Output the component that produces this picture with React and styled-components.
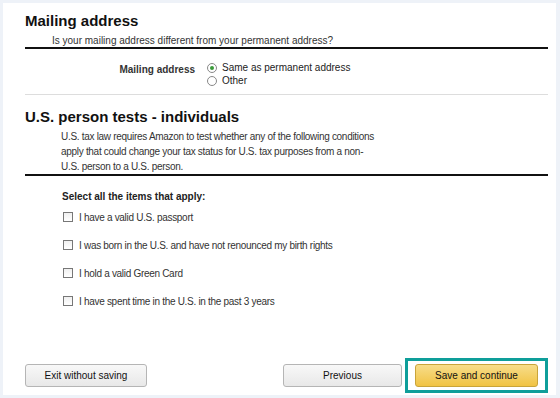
import styled, { createGlobalStyle } from "styled-components";

const GlobalStyle = createGlobalStyle`
  html, body {
    margin: 0;
    padding: 0;
    background: #eef2f8;
  }
  body {
    font-family: "Liberation Sans", Arial, sans-serif;
    color: #333;
  }
`;

const Page = styled.div`
  width: 560px;
  height: 398px;
  padding: 3px 4px 3px 3px;
  box-sizing: border-box;
`;

const Panel = styled.div`
  background: #fff;
  height: 100%;
  padding: 0 8px 0 22px;
  box-sizing: border-box;
  display: flex;
  flex-direction: column;
`;

const Heading = styled.h2`
  margin: ${(p) => p.$top}px 0 0;
  font-size: 15px;
  font-weight: bold;
  color: #111;
  line-height: 20px;
`;

const Intro = styled.p`
  margin: ${(p) => p.$top || 0}px 0 0 ${(p) => p.$indent}px;
  font-size: 10px;
  line-height: ${(p) => p.$lh || 15}px;
  letter-spacing: ${(p) => p.$tight || 0}px;
  color: #333;
  white-space: nowrap;
`;

const Rule = styled.div`
  height: ${(p) => (p.$light ? 1 : 2)}px;
  background: ${(p) => (p.$light ? "#ddd" : "#111")};
  margin-top: ${(p) => p.$top}px;
`;

const FieldRow = styled.div`
  display: flex;
  align-items: flex-start;
  margin-top: 12px;
`;

const FieldLabel = styled.div`
  width: 170px;
  text-align: right;
  font-size: 10px;
  line-height: 12px;
  font-weight: bold;
  color: #333;
  padding-top: 3px;
  margin-right: 12px;
`;

const Options = styled.div`
  display: flex;
  flex-direction: column;
`;

const Option = styled.label`
  display: flex;
  align-items: center;
  gap: 5px;
  font-size: 10px;
  line-height: 13px;
  color: #222;
`;

const Radio = styled.span`
  width: 8px;
  height: 8px;
  border: 1px solid #888;
  border-radius: 50%;
  background: #fff;
  display: flex;
  align-items: center;
  justify-content: center;
  &::after {
    content: "";
    width: 4px;
    height: 4px;
    border-radius: 50%;
    background: ${(p) => (p.$checked ? "#3a9a3a" : "transparent")};
  }
`;

const Checklist = styled.div`
  margin: 15px 0 0 37px;
  display: flex;
  flex-direction: column;
`;

const ListTitle = styled.div`
  font-size: 10px;
  line-height: 12px;
  font-weight: bold;
  color: #222;
`;

const CheckRow = styled.label`
  display: flex;
  align-items: center;
  gap: 6px;
  height: 28px;
  font-size: 10px;
  letter-spacing: -0.3px;
  color: #333;
`;

const Box = styled.span`
  width: 8px;
  height: 8px;
  border: 1px solid #777;
  background: linear-gradient(#f0f0f0, #fff);
  margin-left: 1px;
`;

const Footer = styled.div`
  margin-top: auto;
  margin-bottom: 2px;
  display: flex;
  align-items: center;
  height: 35px;
`;

const Button = styled.button`
  height: 23px;
  width: ${(p) => p.$width}px;
  border: 1px solid #b5b5b5;
  border-radius: 3px;
  background: ${(p) =>
    p.$primary
      ? "linear-gradient(#f7dd8a, #f1c343)"
      : "linear-gradient(#f8f8f8, #e8e8e8)"};
  border-color: ${(p) => (p.$primary ? "#c9a43a" : "#b5b5b5")};
  font-family: inherit;
  font-size: 10px;
  color: #111;
  padding: 0;
`;

const Spacer = styled.div`
  flex: 1;
`;

const Highlight = styled.div`
  border: 3px solid #0e9e9a;
  padding: 3px 7px;
  margin-left: 3px;
  display: flex;
`;

const items = [
  "I have a valid U.S. passport",
  "I was born in the U.S. and have not renounced my birth rights",
  "I hold a valid Green Card",
  "I have spent time in the U.S. in the past 3 years",
];

const App = () => {
  return (
    <Page>
      <GlobalStyle />
      <Panel>
        <Heading $top={8}>Mailing address</Heading>
        <Intro $indent={27} $top={4} $lh={12}>
          Is your mailing address different from your permanent address?
        </Intro>
        <Rule $top={0} />
        <FieldRow>
          <FieldLabel>Mailing address</FieldLabel>
          <Options>
            <Option>
              <Radio $checked />
              Same as permanent address
            </Option>
            <Option>
              <Radio />
              Other
            </Option>
          </Options>
        </FieldRow>
        <Rule $light $top={7} />
        <Heading $top={12}>U.S. person tests - individuals</Heading>
        <Intro $indent={36} $top={2} $tight={-0.3}>
          U.S. tax law requires Amazon to test whether any of the following conditions
          <br />
          apply that could change your tax status for U.S. tax purposes from a non-
          <br />
          U.S. person to a U.S. person.
        </Intro>
        <Rule $top={0} />
        <Checklist>
          <ListTitle>Select all the items that apply:</ListTitle>
          {items.map((item) => (
            <CheckRow key={item}>
              <Box />
              {item}
            </CheckRow>
          ))}
        </Checklist>
        <Footer>
          <Button $width={122}>Exit without saving</Button>
          <Spacer />
          <Button $width={119}>Previous</Button>
          <Highlight>
            <Button $primary $width={123}>
              Save and continue
            </Button>
          </Highlight>
        </Footer>
      </Panel>
    </Page>
  );
};

export default App;
